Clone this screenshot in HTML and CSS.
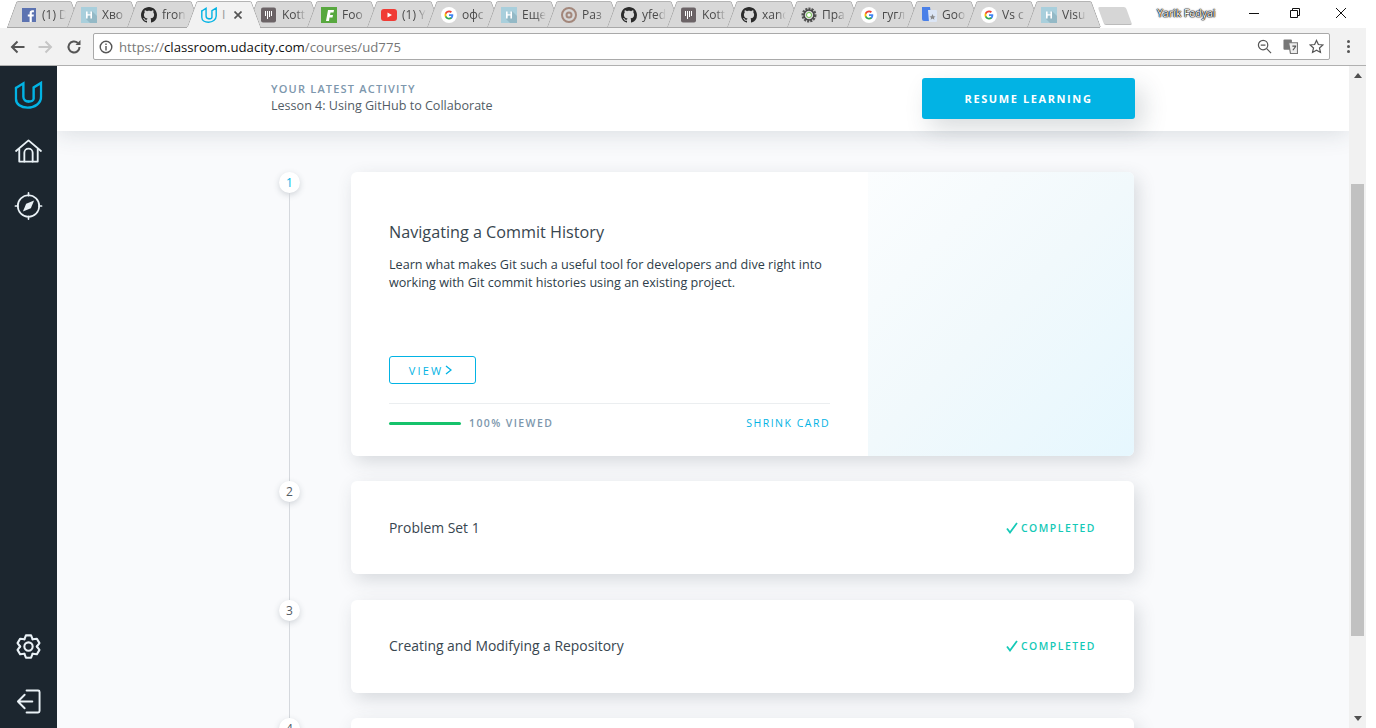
FILE: index.html
```html
<!DOCTYPE html>
<html>
<head>
    <title>Git Course - Udacity</title>
    <link rel="stylesheet" href="styles.css">
</head>
<body>
    <svg class="defs" width="0" height="0">
        <symbol id="i-fb" viewBox="0 0 16 16"><rect x="1" y="1" width="14" height="14" fill="#5c73b1"/><path d="M10.8 15V9.6h1.8l.3-2.1h-2.1V6.2c0-.6.2-1 1-1h1.1V3.3c-.2 0-.9-.1-1.6-.1-1.6 0-2.7 1-2.7 2.8v1.5H6.8v2.1h1.8V15z" fill="#fff"/></symbol>
        <symbol id="i-h" viewBox="0 0 16 16"><rect width="16" height="16" fill="#a9cfdc"/><path d="M5 12l6-8 5 5v7H9z" fill="#94b9c6"/><path d="M5 4.5h1.6v2.7h2.8V4.5H11v7H9.4V8.6H6.6v2.9H5z" fill="#fff"/></symbol>
        <symbol id="i-gh" viewBox="0 0 16 16"><path fill="#2b2b2b" d="M8 0C3.58 0 0 3.58 0 8c0 3.54 2.29 6.53 5.47 7.59.4.07.55-.17.55-.38 0-.19-.01-.82-.01-1.49-2.01.37-2.53-.49-2.69-.94-.09-.23-.48-.94-.82-1.13-.28-.15-.68-.52-.01-.53.63-.01 1.08.58 1.23.82.72 1.21 1.87.87 2.33.66.07-.52.28-.87.51-1.07-1.78-.2-3.64-.89-3.64-3.95 0-.87.31-1.59.82-2.15-.08-.2-.36-1.02.08-2.12 0 0 .67-.21 2.2.82.64-.18 1.32-.27 2-.27.68 0 1.36.09 2 .27 1.53-1.04 2.2-.82 2.2-.82.44 1.1.16 1.92.08 2.12.51.56.82 1.27.82 2.15 0 3.07-1.87 3.75-3.65 3.95.29.25.54.73.54 1.48 0 1.07-.01 1.93-.01 2.2 0 .21.15.46.55.38A8.013 8.013 0 0016 8c0-4.42-3.58-8-8-8z"/></symbol>
        <symbol id="i-u" viewBox="0 0 30 30"><g fill="none" stroke-width="2.600" stroke-linejoin="miter" stroke-linecap="round"><path d="M1.500 7.500L9.500 2.500v14.500c0 3 2.500 5 5.500 5"/><path d="M1.500 7.500v11.500c0 6 5.500 9.500 12.500 9.500 7.500 0 14.500-4.500 14.500-11.500V2l-8 5v12c0 2-3 3-5.500 3"/></g></symbol>
        <symbol id="i-kot" viewBox="0 0 16 16"><rect width="15" height="15" y=".5" rx="2" fill="#6b6366"/><path d="M4.500 4v5M6.500 4v8M8.500 4v6M10.500 4v5" stroke="#fff" stroke-width="1"/></symbol>
        <symbol id="i-food" viewBox="0 0 16 16"><rect width="16" height="16" fill="#58a83f"/><path d="M5 14L7 3h6l-.5 2.500H9.500L9 8h3l-.5 2.500h-3L8 14z" fill="#fff"/></symbol>
        <symbol id="i-yt" viewBox="0 0 16 16"><rect y="2" width="16" height="12" rx="3" fill="#f03b35"/><path d="M6.500 5.500L11 8l-4.500 2.500z" fill="#fff"/></symbol>
        <symbol id="i-g" viewBox="0 0 16 16"><circle cx="8" cy="8" r="8" fill="#fff"/><path d="M12.300 8.100c0-.3 0-.6-.1-.9H8v1.700h2.400c-.1.600-.4 1-.9 1.400v1.100H11c.8-.8 1.300-1.900 1.300-3.300z" fill="#4285f4"/><path d="M8 12.500c1.200 0 2.200-.4 3-1.100L9.500 10.300c-.4.300-.9.400-1.500.4-1.200 0-2.100-.8-2.500-1.800H4v1.200c.7 1.400 2.200 2.400 4 2.400z" fill="#34a853"/><path d="M5.500 8.900c-.2-.6-.2-1.200 0-1.800V5.900H4c-.6 1.300-.6 2.900 0 4.200z" fill="#fbbc05"/><path d="M8 5.300c.7 0 1.200.2 1.700.6l1.300-1.300C10.200 3.900 9.200 3.500 8 3.500c-1.800 0-3.300 1-4 2.400l1.500 1.200C5.900 6.100 6.800 5.300 8 5.300z" fill="#ea4335"/></symbol>
        <symbol id="i-raz" viewBox="0 0 16 16"><g fill="none" stroke="#a3877b"><circle cx="8" cy="8" r="7" stroke-width="2"/><circle cx="8" cy="8" r="2.500" stroke-width="2"/></g></symbol>
        <symbol id="i-cog" viewBox="0 0 16 16"><circle cx="8" cy="8" r="6" fill="none" stroke="#555" stroke-width="3" stroke-dasharray="2 1"/><circle cx="8" cy="8" r="5" fill="none" stroke="#444" stroke-width="1.500"/><circle cx="8" cy="8" r="2.500" fill="#fff" stroke="#6cc04a"/></symbol>
        <symbol id="i-trans" viewBox="0 0 16 16"><path d="M1 0h8l2 14H3a2 2 0 01-2-2z" fill="#4a80e8"/><path d="M7 3h8a1 1 0 011 1v10a1 1 0 01-1 1H8z" fill="#dbe5f5"/><path d="M11.500 7l1 2.200 2 .2-1.600 1.300.5 2.100-1.900-1.200-1.900 1.200.5-2.100L8.500 9.400l2-.2z" fill="#888"/></symbol>
    </svg>

    <div class="window">
        <div class="tabstrip">
            <div class="tab"><svg class="favicon"><use href="#i-fb"/></svg><span class="tab-title">(1) D</span></div>
            <div class="tab"><svg class="favicon"><use href="#i-h"/></svg><span class="tab-title">Хво</span></div>
            <div class="tab"><svg class="favicon"><use href="#i-gh"/></svg><span class="tab-title">fron</span></div>
            <div class="tab tab-active"><svg class="favicon logo-blue"><use href="#i-u"/></svg><span class="tab-title tab-title-short">I</span><svg class="tab-close" viewBox="0 0 8 8"><path d="M.5.5l7 7M7.500.5l-7 7"/></svg></div>
            <div class="tab"><svg class="favicon"><use href="#i-kot"/></svg><span class="tab-title">Kott</span></div>
            <div class="tab"><svg class="favicon"><use href="#i-food"/></svg><span class="tab-title">Foo</span></div>
            <div class="tab"><svg class="favicon"><use href="#i-yt"/></svg><span class="tab-title">(1) Y</span></div>
            <div class="tab"><svg class="favicon"><use href="#i-g"/></svg><span class="tab-title">офс</span></div>
            <div class="tab"><svg class="favicon"><use href="#i-h"/></svg><span class="tab-title">Еще</span></div>
            <div class="tab"><svg class="favicon"><use href="#i-raz"/></svg><span class="tab-title">Раз</span></div>
            <div class="tab"><svg class="favicon"><use href="#i-gh"/></svg><span class="tab-title">yfed</span></div>
            <div class="tab"><svg class="favicon"><use href="#i-kot"/></svg><span class="tab-title">Kott</span></div>
            <div class="tab"><svg class="favicon"><use href="#i-gh"/></svg><span class="tab-title">xanc</span></div>
            <div class="tab"><svg class="favicon"><use href="#i-cog"/></svg><span class="tab-title">Пра</span></div>
            <div class="tab"><svg class="favicon"><use href="#i-g"/></svg><span class="tab-title">гугл</span></div>
            <div class="tab"><svg class="favicon"><use href="#i-trans"/></svg><span class="tab-title">Goo</span></div>
            <div class="tab"><svg class="favicon"><use href="#i-g"/></svg><span class="tab-title">Vs c</span></div>
            <div class="tab"><svg class="favicon"><use href="#i-h"/></svg><span class="tab-title">Visu</span></div>
            <div class="new-tab"></div>
            <div class="profile">Yarik Fedyai</div>
            <div class="win-buttons">
                <svg class="win-btn" viewBox="0 0 12 12"><path d="M1 6.500h10"/></svg>
                <svg class="win-btn" viewBox="0 0 12 12"><path d="M1.500 3.500h7v7h-7zM3.500 3.500v-2h7v7h-2"/></svg>
                <svg class="win-btn win-close" viewBox="0 0 12 12"><path d="M1 1l10 10M11 1L1 11"/></svg>
            </div>
        </div>

        <div class="toolbar">
            <svg class="nav-icon" viewBox="0 0 16 16"><path d="M14.500 8H2M7.500 2.500L2 8l5.500 5.500"/></svg>
            <svg class="nav-icon nav-off" viewBox="0 0 16 16"><path d="M1.500 8H14M8.500 2.500L14 8l-5.500 5.500"/></svg>
            <svg class="nav-icon nav-reload" viewBox="0 0 16 16"><path d="M13.500 8a5.500 5.500 0 11-1.700-4"/><path class="nav-fill" d="M14.500 1v5h-5z"/></svg>
            <div class="omnibox">
                <svg class="info-icon" viewBox="0 0 14 14"><circle cx="7" cy="7" r="5.800"/><path d="M7 6v4.500M7 3.500v1.500"/></svg>
                <span class="url"><span class="url-dim">https://</span>classroom.udacity.com<span class="url-dim">/courses/ud775</span></span>
                <svg class="omni-icon" viewBox="0 0 16 16"><circle cx="6.500" cy="6.500" r="5"/><path d="M10.300 10.300L15 15M4 6.500h5"/></svg>
                <svg class="omni-icon omni-trans" viewBox="0 0 16 16"><rect class="trans-back" x="0.500" y="0.500" width="9" height="11" rx="1"/><path class="trans-page" d="M6 4h9.500v11.500H8z"/><path d="M10 7.500h4M12 7v1M10.500 12l3-4"/></svg>
                <svg class="omni-icon" viewBox="0 0 16 16"><path d="M8 1.500l2 4.400 4.800.5-3.600 3.200 1 4.700L8 11.900l-4.200 2.400 1-4.700L1.200 6.400 6 5.900z"/></svg>
            </div>
            <div class="menu-dots"><i></i><i></i><i></i></div>
        </div>

        <div class="viewport">
            <nav class="sidebar">
                <div class="side-group">
                    <svg class="side-icon logo-blue" viewBox="0 0 30 30"><use href="#i-u"/></svg>
                    <svg class="side-icon home" viewBox="0 0 30 26"><path d="M1.500 13L15 1.500 28.500 13"/><path d="M5 11v13.500h20V11"/><path d="M10.500 24.500V15a4.500 4.500 0 019 0v9.500"/></svg>
                    <svg class="side-icon compass" viewBox="0 0 30 30"><circle cx="15" cy="15" r="11.500"/><path d="M15 1v3M15 26v3M1 15h3M26 15h3"/><path class="side-fill" d="M21 9l-3.500 8.500L9 21l3.500-8.500z"/></svg>
                </div>
                <div class="side-group side-bottom">
                    <svg class="side-icon gear" viewBox="0 0 24 24">
                        <g id="gear-teeth"><path d="M8 5.070L9.530 1.280H14.470L16 5.070"/></g>
                        <use href="#gear-teeth" transform="rotate(60 12 12)"/>
                        <use href="#gear-teeth" transform="rotate(120 12 12)"/>
                        <use href="#gear-teeth" transform="rotate(180 12 12)"/>
                        <use href="#gear-teeth" transform="rotate(240 12 12)"/>
                        <use href="#gear-teeth" transform="rotate(300 12 12)"/>
                        <circle cx="12" cy="12" r="4"/>
                    </svg>
                    <svg class="side-icon exit" viewBox="0 0 26 26"><path d="M11 1.500h12a1.500 1.500 0 011.500 1.500v20a1.500 1.500 0 01-1.500 1.500H11"/><path d="M17 13H2M9 6l-7 7 7 7"/></svg>
                </div>
            </nav>

            <main class="content">
                <header class="activity">
                    <div class="activity-text">
                        <div class="activity-label">YOUR LATEST ACTIVITY</div>
                        <div class="activity-lesson">Lesson 4: Using GitHub to Collaborate</div>
                    </div>
                    <button class="resume-btn">RESUME LEARNING</button>
                </header>

                <div class="lessons">
                    <section class="step step-open">
                        <div class="rail"><span class="step-num step-num-active">1</span><span class="rail-line"></span></div>
                        <div class="card card-big">
                            <div class="card-main">
                                <h2 class="card-title">Navigating a Commit History</h2>
                                <p class="card-desc">Learn what makes Git such a useful tool for developers and dive right into working with Git commit histories using an existing project.</p>
                                <a class="view-btn">VIEW <svg class="view-chevron" viewBox="0 0 7 10"><path d="M1 1l5 4-5 4"/></svg></a>
                                <div class="card-foot">
                                    <span class="progress"></span>
                                    <span class="progress-label">100% VIEWED</span>
                                    <a class="shrink">SHRINK CARD</a>
                                </div>
                            </div>
                            <div class="card-art"></div>
                        </div>
                    </section>

                    <section class="step">
                        <div class="rail"><span class="step-num">2</span><span class="rail-line"></span></div>
                        <div class="card card-row">
                            <span class="row-title">Problem Set 1</span>
                            <span class="done"><svg class="check" viewBox="0 0 12 12"><path d="M1 6.500l3 4L11 1"/></svg>COMPLETED</span>
                        </div>
                    </section>

                    <section class="step">
                        <div class="rail"><span class="step-num">3</span><span class="rail-line"></span></div>
                        <div class="card card-row">
                            <span class="row-title">Creating and Modifying a Repository</span>
                            <span class="done"><svg class="check" viewBox="0 0 12 12"><path d="M1 6.500l3 4L11 1"/></svg>COMPLETED</span>
                        </div>
                    </section>

                    <section class="step">
                        <div class="rail"><span class="step-num">4</span><span class="rail-line"></span></div>
                        <div class="card card-row"></div>
                    </section>
                </div>
            </main>

            <div class="scrollbar">
                <span class="arrow-up"></span>
                <span class="thumb"></span>
                <span class="arrow-down"></span>
            </div>
        </div>
    </div>
</body>
</html>
```

FILE: styles.css
```css
html, body {
    margin: 0;
    height: 728px;
    overflow: hidden;
    background-color: #fff;
}

.defs {
    display: block;
    height: 0;
}

.window {
    width: 1366px;
    height: 728px;
    display: flex;
    flex-direction: column;
}

/* tab strip */
.tabstrip {
    height: 28px;
    padding-left: 7px;
    display: flex;
    box-sizing: border-box;
    align-items: stretch;
    font-family: 'Open Sans', sans-serif;
}

.tab {
    position: relative;
    z-index: 1;
    width: 73px;
    margin-right: -13px;
    padding: 2px 0 0 14px;
    box-sizing: border-box;
    display: flex;
    align-items: center;
    flex-shrink: 0;
    border-bottom: 1px solid #a8a8a8;
}

.tab::before,
.tab::after {
    content: '';
    position: absolute;
    z-index: -1;
    top: 1px;
    bottom: 0;
    width: 50%;
    background-color: #d8d8d8;
    border-top: 1px solid #b4b4b4;
    transform-origin: bottom;
}

.tab::before {
    left: 0;
    border-left: 1px solid #a8a8a8;
    border-radius: 2px 0 0 0;
    transform: skewX(-20deg);
}

.tab::after {
    right: 0;
    border-right: 1px solid #a8a8a8;
    border-radius: 0 2px 0 0;
    transform: skewX(20deg);
}

.tab-active {
    z-index: 2;
    border-bottom-color: #f2f2f2;
}

.tab-active::before,
.tab-active::after {
    background-color: #f2f2f2;
}

.favicon {
    width: 16px;
    height: 16px;
    flex-shrink: 0;
}

.logo-blue {
    stroke: #02b3e4;
    color: #02b3e4;
}

.tab-title {
    width: 24px;
    margin-left: 5px;
    white-space: nowrap;
    font-size: 12px;
    color: #4a4a4a;
    -webkit-mask-image: linear-gradient(to right, #000 60%, transparent);
    mask-image: linear-gradient(to right, #000 60%, transparent);
}

.tab-title-short {
    width: 6px;
    color: #999;
    -webkit-mask-image: none;
    mask-image: none;
}

.tab-close {
    width: 8px;
    height: 8px;
    margin-left: 6px;
    fill: none;
    stroke: #555;
    stroke-width: 1.700;
}

.new-tab {
    width: 28px;
    height: 17px;
    margin: 7px 0 0 14px;
    background-color: #d6d6d6;
    border-bottom: 1px solid #bbb;
    border-radius: 2px;
    transform: skewX(20deg);
    flex-shrink: 0;
}

.profile {
    margin: 6px 0 0 28px;
    font-size: 10.500px;
    line-height: 15px;
    color: #fff;
    white-space: nowrap;
    text-shadow: 0 0 1px #000, 0 0 1px #000, 0 0 1px #000, 0 0 2px #000;
}

.win-buttons {
    margin-left: auto;
    display: flex;
    gap: 29px;
    padding: 7px 19px 0 0;
}

.win-btn {
    width: 12px;
    height: 12px;
    fill: none;
    stroke: #111;
    stroke-width: 1;
}

.win-close {
    margin-left: 5px;
}

/* browser toolbar */
.toolbar {
    height: 38px;
    padding-left: 10px;
    box-sizing: border-box;
    display: flex;
    align-items: center;
    gap: 11px;
    background-color: #f2f2f2;
    border-bottom: 1px solid #b0b0b0;
}

.nav-icon {
    width: 16px;
    height: 16px;
    fill: none;
    stroke: #555;
    stroke-width: 2;
    flex-shrink: 0;
}

.nav-off {
    stroke: #c6c6c6;
}

.nav-reload {
    margin-left: 2px;
}

.nav-fill {
    fill: #555;
    stroke: none;
}

.omnibox {
    width: 1237px;
    height: 27px;
    padding: 0 5px;
    box-sizing: border-box;
    display: flex;
    align-items: center;
    background-color: #fff;
    border: 1px solid #a9a9a9;
    border-radius: 2px;
    flex-shrink: 0;
}

.info-icon {
    width: 14px;
    height: 14px;
    fill: none;
    stroke: #555;
    stroke-width: 1.400;
}

.url {
    margin-left: 6px;
    font-family: 'Open Sans', sans-serif;
    font-size: 13.200px;
    color: #111;
    flex-grow: 1;
}

.url-dim {
    color: #777;
}

.omni-icon {
    width: 15px;
    height: 15px;
    margin-left: 11px;
    fill: none;
    stroke: #555;
    stroke-width: 1.300;
}

.trans-back {
    fill: #777;
    stroke: none;
}

.trans-page {
    fill: #eee;
    stroke: #777;
}

.menu-dots {
    margin-left: 6px;
    display: flex;
    flex-direction: column;
    gap: 2px;
}

.menu-dots i {
    width: 3px;
    height: 3px;
    border-radius: 50%;
    background-color: #555;
}

/* page area */
.viewport {
    flex: 1;
    min-height: 0;
    display: flex;
}

.sidebar {
    width: 57px;
    flex-shrink: 0;
    display: flex;
    flex-direction: column;
    justify-content: space-between;
    align-items: center;
    background-color: #1c262f;
    padding: 15px 0 14px;
    box-sizing: border-box;
}

.side-group {
    display: flex;
    flex-direction: column;
    align-items: center;
    gap: 30px;
}

.side-icon {
    width: 29px;
    height: 28px;
    fill: none;
    stroke: #e9f1f6;
    stroke-width: 2;
    stroke-linejoin: round;
    stroke-linecap: round;
}

.side-icon.logo-blue {
    stroke: #02b3e4;
}

.side-fill {
    fill: #e9f1f6;
    stroke: none;
}

.home {
    height: 24px;
}

.compass {
    margin-top: -1px;
    stroke-width: 1.800;
}

.gear,
.exit {
    width: 25px;
    height: 25px;
}

.content {
    flex: 1;
    min-width: 0;
    overflow: hidden;
    background-color: #f9fafc;
    font-family: 'Open Sans', sans-serif;
}

.activity {
    position: relative;
    z-index: 3;
    height: 65px;
    padding: 0 214px;
    display: flex;
    justify-content: space-between;
    align-items: center;
    background-color: #fff;
    box-shadow: 0 2px 24px rgba(46, 61, 73, 0.16);
}

.activity-text {
    padding-bottom: 2px;
}

.activity-label {
    font-size: 11px;
    font-weight: 600;
    line-height: 15px;
    letter-spacing: 1.200px;
    color: #7d97ad;
}

.activity-lesson {
    margin-top: 1px;
    font-size: 12.570px;
    line-height: 17px;
    color: #525c65;
}

.resume-btn {
    width: 213px;
    height: 41px;
    padding: 0;
    border: none;
    border-radius: 3px;
    background-color: #02b3e4;
    color: #fff;
    font-family: 'Open Sans', sans-serif;
    font-size: 11px;
    font-weight: bold;
    letter-spacing: 1.600px;
    box-shadow: 8px 10px 24px rgba(46, 61, 73, 0.18);
}

.lessons {
    padding: 41px 0 0 222px;
}

.step {
    display: flex;
    padding-bottom: 25.500px;
}

.step-open {
    padding-bottom: 25.250px;
}

.rail {
    width: 21px;
    margin-right: 51px;
    margin-bottom: -25.500px;
    display: flex;
    flex-direction: column;
    align-items: center;
    flex-shrink: 0;
}

.step-num {
    width: 21px;
    height: 21px;
    border-radius: 50%;
    background-color: #fff;
    color: #525c65;
    font-size: 12px;
    line-height: 21px;
    text-align: center;
    box-shadow: 0 2px 6px rgba(46, 61, 73, 0.2);
    flex-shrink: 0;
}

.step-num-active {
    color: #02b3e4;
}

.rail-line {
    width: 1px;
    flex: 1;
    background-color: #d5d8dd;
}

.card {
    width: 783px;
    background-color: #fff;
    border-radius: 6px;
    box-shadow: 4px 6px 18px rgba(46, 61, 73, 0.17);
    flex-shrink: 0;
}

.card-big {
    height: 284px;
    display: flex;
    overflow: hidden;
}

.card-main {
    width: 517px;
    padding: 49px 38px 14px;
    box-sizing: border-box;
    display: flex;
    flex-direction: column;
}

.card-title {
    margin: 0;
    font-size: 16.200px;
    font-weight: normal;
    line-height: 22px;
    color: #38464f;
}

.card-desc {
    margin: 13px 0 0;
    font-size: 12.620px;
    line-height: 18px;
    color: #2e3d49;
}

.view-btn {
    width: 87px;
    height: 28px;
    margin-top: auto;
    margin-bottom: 19px;
    padding-right: 4px;
    box-sizing: border-box;
    display: flex;
    justify-content: center;
    align-items: center;
    gap: 2px;
    border: 1px solid #02b3e4;
    border-radius: 3px;
    color: #02b3e4;
    font-size: 11px;
    letter-spacing: 2.200px;
}

.view-chevron {
    width: 7px;
    height: 10px;
    fill: none;
    stroke: #02b3e4;
    stroke-width: 1.300;
}

.card-foot {
    height: 39px;
    display: flex;
    align-items: center;
    border-top: 1px solid #ebeef0;
    box-sizing: border-box;
}

.progress {
    width: 72px;
    height: 3px;
    background-color: #15c26b;
    border-radius: 2px;
}

.progress-label {
    margin-left: 8px;
    font-size: 10.500px;
    font-weight: 600;
    letter-spacing: 1.400px;
    color: #7d97ad;
}

.shrink {
    margin-left: auto;
    font-size: 10.500px;
    letter-spacing: 1.500px;
    color: #02b3e4;
}

.card-art {
    flex: 1;
    background: linear-gradient(135deg, #fbfdfe 0%, #f1f9fc 50%, #e6f7fe 100%);
}

.card-row {
    height: 93px;
    padding: 0 38px;
    box-sizing: border-box;
    display: flex;
    justify-content: space-between;
    align-items: center;
}

.row-title {
    font-size: 13.900px;
    line-height: 18px;
    margin-top: -0.500px;
    color: #38464f;
}

.done {
    display: flex;
    align-items: center;
    gap: 3px;
    font-size: 10.400px;
    font-weight: 600;
    letter-spacing: 1.500px;
    color: #15c9b7;
}

.check {
    width: 12px;
    height: 12px;
    fill: none;
    stroke: #15c9b7;
    stroke-width: 1.800;
}

/* scrollbar */
.scrollbar {
    width: 17px;
    flex-shrink: 0;
    display: flex;
    flex-direction: column;
    align-items: center;
    background-color: #f1f1f1;
}

.arrow-up,
.arrow-down {
    width: 0;
    height: 0;
    border-left: 4px solid transparent;
    border-right: 4px solid transparent;
}

.arrow-up {
    margin-top: 7px;
    border-bottom: 5px solid #505050;
}

.arrow-down {
    margin-top: 80px;
    border-top: 5px solid #505050;
}

.thumb {
    width: 13px;
    height: 452px;
    margin-top: 106px;
    background-color: #c1c1c1;
}
```
